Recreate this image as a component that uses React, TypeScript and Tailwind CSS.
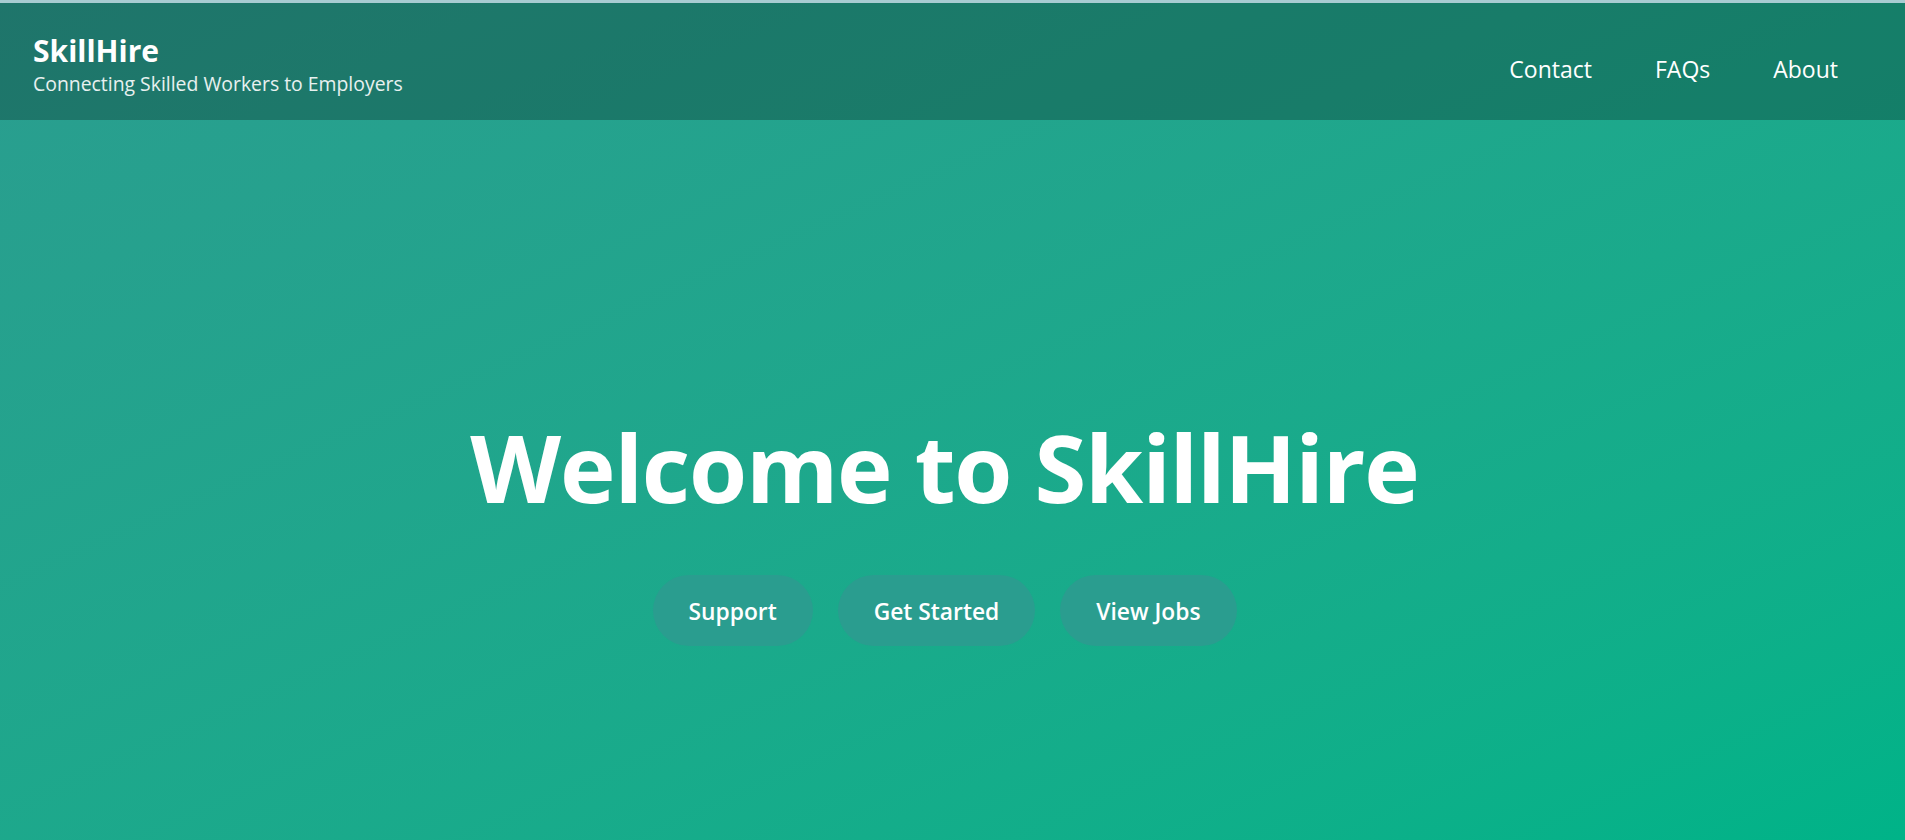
import React from 'react';

const navLinks = ['Contact', 'FAQs', 'About'];
const actions = ['Support', 'Get Started', 'View Jobs'];

function Header() {
  return (
    <header className="h-[117px] bg-black/25 flex items-start justify-between pl-[33px] pr-[67px]">
      <div className="flex flex-col pt-[31px]">
        <h1 className="text-[30px] font-bold text-white leading-[34px]">SkillHire</h1>
        <p className="mt-[3px] text-[19.4px] text-white/90 leading-[26px]">Connecting Skilled Workers to Employers</p>
      </div>
      <nav className="flex items-center gap-[63px] self-center pt-[16px]">
        {navLinks.map((link) => (
          <a key={link} href="#" className="text-[23px] text-white">
            {link}
          </a>
        ))}
      </nav>
    </header>
  );
}

export default function App() {
  return (
    <div
      className="min-h-screen flex flex-col bg-gradient-to-br from-[#2a9d8f] to-[#00b388]"
      style={{ fontFamily: '"Open Sans", "Noto Sans", sans-serif' }}
    >
      <div className="h-[3px] bg-[#a8ccd2]" />
      <Header />
      {/* Hero */}
      <main className="flex-1 flex flex-col items-center pt-[287px] pr-[16px]">
        <h2 className="text-[94px] font-bold text-white leading-[120px] tracking-[-1.2px]">Welcome to SkillHire</h2>
        <div className="flex items-center gap-[25px] mt-[48px]">
          {actions.map((label) => (
            <button
              key={label}
              className="h-[71px] px-[36px] pt-[4px] rounded-full bg-[#2a9d8f] text-white text-[22.8px] font-semibold"
            >
              {label}
            </button>
          ))}
        </div>
      </main>
    </div>
  );
}
